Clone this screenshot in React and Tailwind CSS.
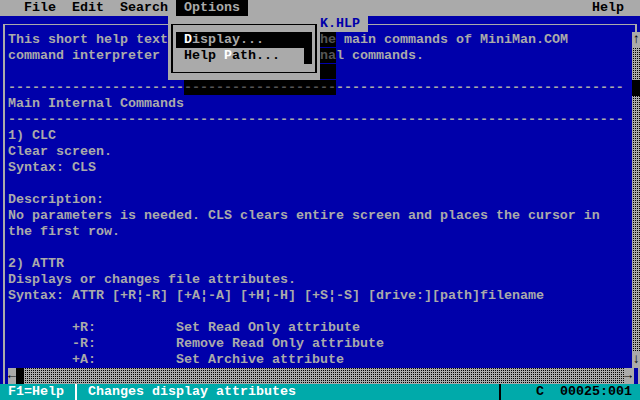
import React from "react";

const dots = "bg-[conic-gradient(#000_25%,#aaaaaa_0)] bg-size-[2px_2px] bg-[length:2px_2px]";

const Shade = ({ children }) => <span className="bg-black text-[#555555]">{children}</span>;

// cols 21-39 sit under the Options menu
const Hidden = () => <span className="inline-block w-[152px] h-4 align-top" />;

const dash = (n) => "-".repeat(n);

const lines = [
  <>
    {"This short help text"}
    <Hidden />
    <Shade>he</Shade>
    {" main commands of MiniMan.COM"}
  </>,
  <>
    {"command interpreter "}
    <Hidden />
    <Shade>na</Shade>
    {"l commands."}
  </>,
  <>
    <span className="inline-block w-[312px] h-4 align-top" />
    <Shade>{"  "}</Shade>
  </>,
  <>
    {dash(22)}
    <Shade>{dash(19)}</Shade>
    {dash(36)}
  </>,
  "Main Internal Commands",
  dash(77),
  "1) CLC",
  "Clear screen.",
  "Syntax: CLS",
  "",
  "Description:",
  "No parameters is needed. CLS clears entire screen and places the cursor in",
  "the first row.",
  "",
  "2) ATTR",
  "Displays or changes file attributes.",
  "Syntax: ATTR [+R¦-R] [+A¦-A] [+H¦-H] [+S¦-S] [drive:][path]filename",
  "",
  "        +R:          Set Read Only attribute",
  "        -R:          Remove Read Only attribute",
  "        +A:          Set Archive attribute",
];

const VLine = ({ color = "bg-[#aaaaaa]" }) => (
  <div className="w-2 h-full shrink-0">
    <div className={`ml-[3px] w-[2px] h-full ${color}`} />
  </div>
);

export default function App() {
  return (
    <div className="relative w-[640px] h-[400px] overflow-hidden bg-[#0000aa] text-[#aaaaaa] font-['Liberation_Mono',monospace] text-[13.33px] leading-4 font-bold whitespace-pre">
      {/* menu bar */}
      <div className="h-4 flex bg-[#aaaaaa] text-black">
        <span>{"   File  Edit  Search "}</span>
        <span className="bg-black text-[#aaaaaa]">{" Options "}</span>
        <span className="flex-1" />
        <span>{"Help  "}</span>
      </div>

      {/* window top border */}
      <div className="h-4 flex">
        <div className="w-2 shrink-0">
          <div className="ml-[3px] mt-2 h-2 border-l-2 border-t border-[#aaaaaa]" />
        </div>
        <div className="w-[312px] mt-2 border-t border-[#aaaaaa]" />
        <span className="bg-[#aaaaaa] text-[#0000aa]">{"K.HLP "}</span>
        <div className="flex-1 mt-2 border-t border-[#aaaaaa]" />
        <div className="w-2 shrink-0">
          <div className="mt-2 h-2 w-[5px] border-r-2 border-t border-[#aaaaaa]" />
        </div>
      </div>

      {/* body */}
      <div className="flex h-[336px]">
        <VLine />
        <div className="w-[624px] flex flex-col">
          {lines.map((l, i) => (
            <div key={i} className="h-4">{l}</div>
          ))}
        </div>
        <div className="w-2 flex flex-col">
          <div className="h-4 bg-[#aaaaaa] text-black text-center">↑</div>
          <div className={`h-8 ${dots}`} />
          <div className="h-4 bg-black" />
          <div className={`h-[256px] ${dots}`} />
          <div className="h-4 bg-[#aaaaaa] text-black text-center">↓</div>
        </div>
      </div>

      {/* horizontal scrollbar */}
      <div className="flex h-4">
        <VLine />
        <div className="w-2 bg-[#aaaaaa] text-black text-center">←</div>
        <div className="w-2 bg-black" />
        <div className={`w-[600px] ${dots}`} />
        <div className="w-2 bg-[#aaaaaa] text-black text-center">→</div>
        <div className="w-2 flex gap-[2px]">
          <div className="w-[2px] bg-[#aaaaaa]" />
          <div className="ml-[2px] w-[2px] bg-[#aaaaaa]" />
        </div>
      </div>

      {/* status bar */}
      <div className="flex h-4 bg-[#00aaaa] text-white">
        <span className="w-[72px]">{" F1=Help"}</span>
        <VLine color="bg-white" />
        <span className="w-[416px]">{" Changes display attributes"}</span>
        <VLine color="bg-black" />
        <span className="text-black">{"    C  00025:001"}</span>
      </div>

      {/* Options dropdown */}
      <div className="absolute left-[168px] top-4 w-[152px] h-16 bg-[#aaaaaa]">
        <div className="absolute left-[3px] right-[3px] top-2 bottom-[7px] border-x-2 border-y border-black" />
        <div className="absolute left-2 top-4 flex flex-col">
          <div className="h-4 w-[136px] bg-black text-[#aaaaaa]">
            {" "}<span className="text-white">D</span>{"isplay..."}
          </div>
          <div className="h-4 w-[136px] flex">
            <span className="w-[128px] text-black">
              {" Help "}<span className="text-white">P</span>{"ath..."}
            </span>
            <span className="w-2 bg-black" />
          </div>
        </div>
      </div>
    </div>
  );
}
